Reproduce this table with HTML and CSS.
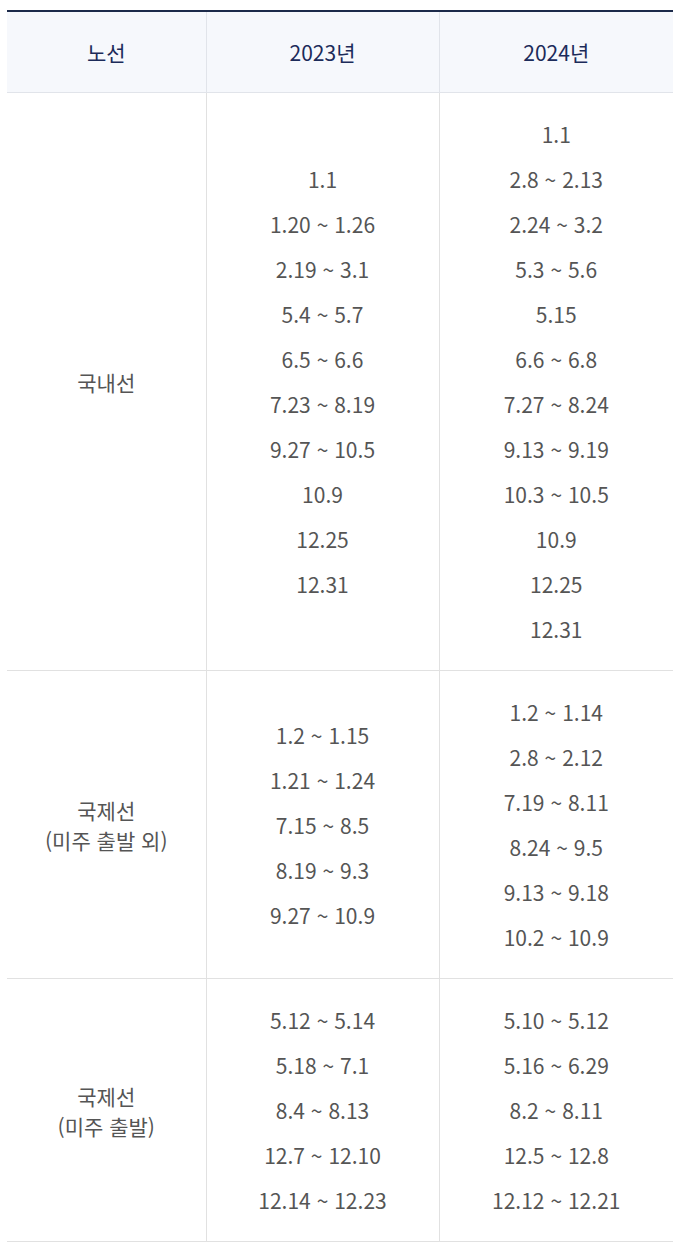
FILE: index.html
```html
<!DOCTYPE html>
<html lang="ko">
<head>
<meta charset="utf-8">
<link rel="stylesheet" href="styles.css">
</head>
<body>
<table class="sched">
  <colgroup>
    <col class="c1"><col class="c2"><col class="c3">
  </colgroup>
  <thead>
    <tr><th>노선</th><th>2023년</th><th>2024년</th></tr>
  </thead>
  <tbody>
    <tr>
      <td class="route">국내선</td>
      <td><p>1.1</p><p>1.20 ~ 1.26</p><p>2.19 ~ 3.1</p><p>5.4 ~ 5.7</p><p>6.5 ~ 6.6</p><p>7.23 ~ 8.19</p><p>9.27 ~ 10.5</p><p>10.9</p><p>12.25</p><p>12.31</p></td>
      <td><p>1.1</p><p>2.8 ~ 2.13</p><p>2.24 ~ 3.2</p><p>5.3 ~ 5.6</p><p>5.15</p><p>6.6 ~ 6.8</p><p>7.27 ~ 8.24</p><p>9.13 ~ 9.19</p><p>10.3 ~ 10.5</p><p>10.9</p><p>12.25</p><p>12.31</p></td>
    </tr>
    <tr>
      <td class="route">국제선<br>(미주 출발 외)</td>
      <td><p>1.2 ~ 1.15</p><p>1.21 ~ 1.24</p><p>7.15 ~ 8.5</p><p>8.19 ~ 9.3</p><p>9.27 ~ 10.9</p></td>
      <td><p>1.2 ~ 1.14</p><p>2.8 ~ 2.12</p><p>7.19 ~ 8.11</p><p>8.24 ~ 9.5</p><p>9.13 ~ 9.18</p><p>10.2 ~ 10.9</p></td>
    </tr>
    <tr>
      <td class="route">국제선<br>(미주 출발)</td>
      <td><p>5.12 ~ 5.14</p><p>5.18 ~ 7.1</p><p>8.4 ~ 8.13</p><p>12.7 ~ 12.10</p><p>12.14 ~ 12.23</p></td>
      <td><p>5.10 ~ 5.12</p><p>5.16 ~ 6.29</p><p>8.2 ~ 8.11</p><p>12.5 ~ 12.8</p><p>12.12 ~ 12.21</p></td>
    </tr>
  </tbody>
</table>
</body>
</html>
```

FILE: styles.css
```css
html, body {
  margin: 0;
  padding: 0;
  background: #fff;
}
body {
  padding: 10px 11px 0 7px;
  font-family: "Noto Sans CJK KR", "Noto Sans", sans-serif;
}
.sched {
  width: 666px;
  border-collapse: collapse;
  table-layout: fixed;
  border-top: 2px solid #1c2a4a;
}
.c1 { width: 199px; }
.c2 { width: 233px; }
.c3 { width: 234px; }
.sched th {
  height: 80px;
  padding: 0;
  background: #f6f8fc;
  color: #1c2b5a;
  font-weight: 400;
  font-size: 21px;
  border-bottom: 1px solid #e1e4ea;
  border-left: 1px solid #e1e4ea;
  text-align: center;
  vertical-align: middle;
}
.sched th:first-child,
.sched td:first-child {
  border-left: none;
}
.sched td {
  padding: 19px 0 18px;
  border-bottom: 1px solid #e1e1e1;
  border-left: 1px solid #e1e1e1;
  text-align: center;
  vertical-align: middle;
  color: #555;
  font-size: 21px;
  line-height: 45px;
}
.sched td.route {
  line-height: 30px;
}
.sched td p {
  margin: 0;
}
```
